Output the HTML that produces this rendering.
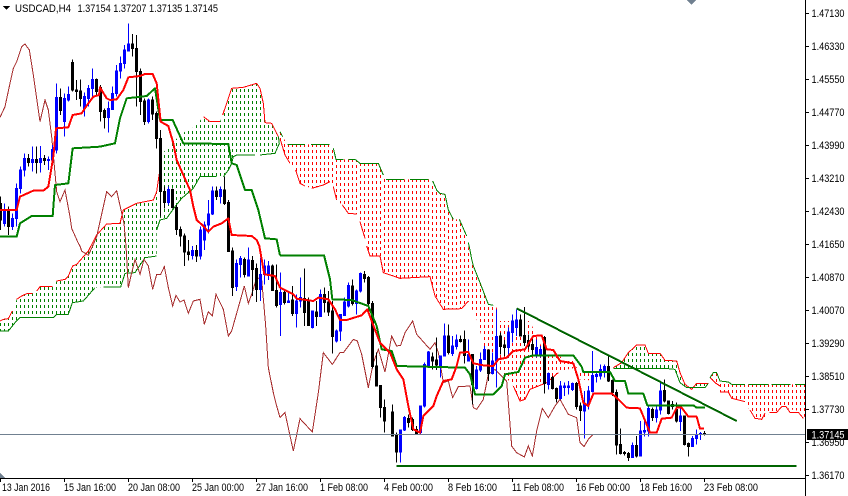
<!DOCTYPE html>
<html><head><meta charset="utf-8"><title>USDCAD,H4</title>
<style>
html,body{margin:0;padding:0;background:#fff;width:848px;height:496px;overflow:hidden}
svg{display:block}
text{font-family:"Liberation Sans",sans-serif;font-size:11px;fill:#000}
.b{stroke:#0000ff;stroke-width:3;fill:#fff}
.r{stroke:#000;stroke-width:3;fill:#f00}
.tk{fill:none;stroke:#ff0000;stroke-width:6;stroke-linejoin:round}
.kj{fill:none;stroke:#008000;stroke-width:6;stroke-linejoin:round}
.ch{fill:none;stroke:#a52a2a;stroke-width:3}
.gl{fill:none;stroke:#008000;stroke-width:3}
.rl{fill:none;stroke:#ff0000;stroke-width:3}
.tr{fill:none;stroke:#006400;stroke-width:6}
.cols{fill:none;stroke-width:3;stroke-dasharray:9 9}
</style></head><body>
<svg width="848" height="496" viewBox="0 0 848 496" xmlns="http://www.w3.org/2000/svg">
<defs>
<path id="cols" d="M1.5 0V1480M13.5 0V1480M25.5 0V1480M37.5 0V1480M49.5 0V1480M61.5 0V1480M73.5 0V1480M85.5 0V1480M97.5 0V1480M109.5 0V1480M121.5 0V1480M133.5 0V1480M145.5 0V1480M157.5 0V1480M169.5 0V1480M181.5 0V1480M193.5 0V1480M205.5 0V1480M217.5 0V1480M229.5 0V1480M241.5 0V1480M253.5 0V1480M265.5 0V1480M277.5 0V1480M289.5 0V1480M301.5 0V1480M313.5 0V1480M325.5 0V1480M337.5 0V1480M349.5 0V1480M361.5 0V1480M373.5 0V1480M385.5 0V1480M397.5 0V1480M409.5 0V1480M421.5 0V1480M433.5 0V1480M445.5 0V1480M457.5 0V1480M469.5 0V1480M481.5 0V1480M493.5 0V1480M505.5 0V1480M517.5 0V1480M529.5 0V1480M541.5 0V1480M553.5 0V1480M565.5 0V1480M577.5 0V1480M589.5 0V1480M601.5 0V1480M613.5 0V1480M625.5 0V1480M637.5 0V1480M649.5 0V1480M661.5 0V1480M673.5 0V1480M685.5 0V1480M697.5 0V1480M709.5 0V1480M721.5 0V1480M733.5 0V1480M745.5 0V1480M757.5 0V1480M769.5 0V1480M781.5 0V1480M793.5 0V1480M805.5 0V1480M817.5 0V1480M829.5 0V1480M841.5 0V1480M853.5 0V1480M865.5 0V1480M877.5 0V1480M889.5 0V1480M901.5 0V1480M913.5 0V1480M925.5 0V1480M937.5 0V1480M949.5 0V1480M961.5 0V1480M973.5 0V1480M985.5 0V1480M997.5 0V1480M1009.5 0V1480M1021.5 0V1480M1033.5 0V1480M1045.5 0V1480M1057.5 0V1480M1069.5 0V1480M1081.5 0V1480M1093.5 0V1480M1105.5 0V1480M1117.5 0V1480M1129.5 0V1480M1141.5 0V1480M1153.5 0V1480M1165.5 0V1480M1177.5 0V1480M1189.5 0V1480M1201.5 0V1480M1213.5 0V1480M1225.5 0V1480M1237.5 0V1480M1249.5 0V1480M1261.5 0V1480M1273.5 0V1480M1285.5 0V1480M1297.5 0V1480M1309.5 0V1480M1321.5 0V1480M1333.5 0V1480M1345.5 0V1480M1357.5 0V1480M1369.5 0V1480M1381.5 0V1480M1393.5 0V1480M1405.5 0V1480M1417.5 0V1480M1429.5 0V1480M1441.5 0V1480M1453.5 0V1480M1465.5 0V1480M1477.5 0V1480M1489.5 0V1480M1501.5 0V1480M1513.5 0V1480M1525.5 0V1480M1537.5 0V1480M1549.5 0V1480M1561.5 0V1480M1573.5 0V1480M1585.5 0V1480M1597.5 0V1480M1609.5 0V1480M1621.5 0V1480M1633.5 0V1480M1645.5 0V1480M1657.5 0V1480M1669.5 0V1480M1681.5 0V1480M1693.5 0V1480M1705.5 0V1480M1717.5 0V1480M1729.5 0V1480M1741.5 0V1480M1753.5 0V1480M1765.5 0V1480M1777.5 0V1480M1789.5 0V1480M1801.5 0V1480M1813.5 0V1480M1825.5 0V1480M1837.5 0V1480M1849.5 0V1480M1861.5 0V1480M1873.5 0V1480M1885.5 0V1480M1897.5 0V1480M1909.5 0V1480M1921.5 0V1480M1933.5 0V1480M1945.5 0V1480M1957.5 0V1480M1969.5 0V1480M1981.5 0V1480M1993.5 0V1480M2005.5 0V1480M2017.5 0V1480M2029.5 0V1480M2041.5 0V1480M2053.5 0V1480M2065.5 0V1480M2077.5 0V1480M2089.5 0V1480M2101.5 0V1480M2113.5 0V1480M2125.5 0V1480M2137.5 0V1480M2149.5 0V1480M2161.5 0V1480M2173.5 0V1480M2185.5 0V1480M2197.5 0V1480M2209.5 0V1480M2221.5 0V1480M2233.5 0V1480M2245.5 0V1480M2257.5 0V1480M2269.5 0V1480M2281.5 0V1480M2293.5 0V1480M2305.5 0V1480M2317.5 0V1480M2329.5 0V1480M2341.5 0V1480M2353.5 0V1480M2365.5 0V1480M2377.5 0V1480M2389.5 0V1480M2401.5 0V1480M2413.5 0V1480"/>
<clipPath id="cg">
<polygon transform="translate(0,738)" points="0,225 10,220 25,218 37,195 50,160 65,150 80,143 97,142 110,135 120,122 158,122 170,105 195,100 205,90 218,60 230,55 245,38 265,15 290,-33 320,-66 360,-68 370,-108 410,-128 460,-138 470,-163 478,-268 525,-318 555,-343 585,-358 610,-388 630,-373 660,-373 668,-393 685,-443 695,-473 730,-476 770,-488 780,-473 790,-428 795,-370 815,-368 835,-328 838,-308 825,-278 780,-273 710,-273 700,-268 695,-248 685,-228 670,-208 600,-208 580,-173 545,-143 525,-118 500,-83 480,-78 470,-48 470,30 435,35 405,80 375,82 362,123 310,123 285,125 250,165 217,170 205,205 170,205 160,215 60,215 45,230 25,255 0,255"/>
<polygon transform="translate(1680,738)" points="160,365 185,350 205,320 230,297 255,297 265,322 300,322 315,343 350,345 360,380 375,415 395,430 395,425 380,425 360,410 345,370 325,368 160,368"/>
<polygon transform="translate(1680,738)" points="395,430 410,412 445,412 445,412 435,425 405,425"/>
</clipPath>
<clipPath id="cr">
<polygon transform="translate(840,0)" points="0,395 8,410 22,433 148,433 160,445 168,478 225,478 240,490 295,490 310,525 315,538 450,538 470,570 480,580 495,583 505,630 520,658 540,658 560,708 565,738 575,778 580,798 600,848 625,913 640,916 650,923 660,963 750,963 770,1010 790,1050 840,1070 880,1083 900,1116 950,1123 950,1143 900,1138 890,1103 840,1113 835,1118 800,1148 750,1168 735,1198 720,1203 700,1158 670,1123 650,1113 620,1078 610,1028 590,958 565,903 545,926 490,928 465,888 450,830 360,835 310,818 300,768 270,768 260,738 255,715 240,665 230,642 205,640 187,615 170,600 160,560 150,545 130,555 95,565 75,558 60,550 47,510 30,490 15,465 0,415"/>
<polygon transform="translate(1680,738)" points="480,405 505,408 515,415 735,415 735,515 720,495 690,490 670,480 650,500 630,500 610,518 590,520 570,495 555,465 515,465 505,438 480,438"/>
<polygon transform="translate(1680,738)" points="450,395 460,380 470,380 480,405 480,420 465,410"/>
</clipPath>
<clipPath id="x1"><rect x="840" y="0" width="162" height="1480"/></clipPath>
<clipPath id="x2"><rect x="1002" y="0" width="72" height="1480"/></clipPath>
<clipPath id="x3"><rect x="1074" y="0" width="78" height="1480"/></clipPath>
<clipPath id="x4"><rect x="1152" y="0" width="144" height="1480"/></clipPath>
<clipPath id="x5"><rect x="1296" y="0" width="48" height="1480"/></clipPath>
<clipPath id="x6"><rect x="1344" y="0" width="36" height="1480"/></clipPath>
<clipPath id="x7"><rect x="1380" y="0" width="780" height="1480"/></clipPath>
<clipPath id="x8"><rect x="2160" y="0" width="255" height="1480"/></clipPath>
<clipPath id="cp"><rect x="0" y="0" width="805" height="478"/></clipPath>
</defs>
<rect width="848" height="496" fill="#fff"/>
<g clip-path="url(#cp)">
<g transform="scale(.33333333)" shape-rendering="crispEdges">
<!-- clouds -->
<g clip-path="url(#cg)"><use href="#cols" class="cols" stroke="#008000" style="stroke-dashoffset:-15"/></g>
<g clip-path="url(#cr)">
<g clip-path="url(#x1)"><use href="#cols" class="cols" stroke="#ff0000" style="stroke-dashoffset:0"/></g>
<g clip-path="url(#x2)"><use href="#cols" class="cols" stroke="#ff0000" style="stroke-dashoffset:-9"/></g>
<g clip-path="url(#x3)"><use href="#cols" class="cols" stroke="#ff0000" style="stroke-dashoffset:-3"/></g>
<g clip-path="url(#x4)"><use href="#cols" class="cols" stroke="#ff0000" style="stroke-dashoffset:-15"/></g>
<g clip-path="url(#x5)"><use href="#cols" class="cols" stroke="#ff0000" style="stroke-dashoffset:0"/></g>
<g clip-path="url(#x6)"><use href="#cols" class="cols" stroke="#ff0000" style="stroke-dashoffset:-6"/></g>
<g clip-path="url(#x7)"><use href="#cols" class="cols" stroke="#ff0000" style="stroke-dashoffset:-3"/></g>
<g clip-path="url(#x8)"><use href="#cols" class="cols" stroke="#ff0000" style="stroke-dashoffset:0"/></g>
</g>
<g transform="translate(0,738)">
<path class="rl" d="M0 225L10 220L25 218L37 195M50 160L65 150L80 143L97 142M110 135L120 122L158 122M170 105L195 100L205 90L218 60L230 55L245 38L265 15L290 -33L320 -66L360 -68L370 -108L410 -128L460 -138L470 -163L478 -218M610 -388L630 -373L660 -373M668 -393L685 -443L695 -473L730 -476L770 -488L780 -473L790 -428L795 -370L815 -368L835 -328"/>
<path class="gl" d="M835 -328L838 -308L825 -278L780 -273M765 -273L710 -273L700 -268L695 -248L685 -228L670 -208M650 -208L600 -208L580 -173L545 -143L525 -118L500 -83L480 -78L470 -48M470 30L435 35L405 80L375 82L362 123L310 123M285 125L250 165L217 170L205 205L170 205L160 215L60 215L45 230M45 230L25 255L0 255"/>
</g>
<g transform="translate(840,0)">
<path class="gl" d="M0 395L8 410M22 433L75 433M93 433L148 433M160 445L168 478L190 478M205 478L225 478L240 490L295 490L310 525M318 538L372 538M390 538L445 538M458 543L470 570L480 580L495 583L505 630L520 658M538 658L560 708M565 728L570 750L575 778L580 798L600 848L625 913L640 916"/>
<path class="rl" d="M0 415L15 465L30 490M47 510L60 550L75 558M95 565L130 555L150 545M160 560L170 600M187 615L205 640L230 642M240 665L255 715M260 738L270 768L300 768L310 818L360 835L450 830L465 888L490 928L545 926L565 903M700 1158L720 1203L735 1198L750 1168L800 1148L835 1118"/>
</g>
<g transform="translate(1680,738)">
<path class="rl" d="M160 365L185 350L205 320L230 297L255 297L265 322L300 322L315 343L350 345L360 380L375 415L395 430L410 412L445 412M570 492L585 517L605 520L615 502M628 499L650 499L665 482L678 482L690 499L715 499L730 517M515 457L555 467M480 438L505 438L515 457M450 395L465 410L480 420"/>
<path class="gl" d="M160 368L325 368L345 370L360 410L380 425L435 425L445 412M450 395L460 380L470 380L480 405L505 408L515 415L555 415M565 415L625 415M635 415L692 415M705 415L735 415"/>
</g>
<!-- chikou -->
<g>
<polyline class="ch" points="0,352 15,320 30,250 40,205 50,185 65,140 75,132 88,150 100,225 120,365 135,300 145,330 155,410 170,575 180,605 195,570 210,650 215,685 235,730 240,738 245,753 265,766 278,738 290,710 320,575 335,590 350,572 372,670 378,738 385,863 395,818 405,778 420,823 432,778 445,798 458,868 470,823 482,823 493,800 505,863 518,918 528,886 540,906 552,900 565,940 580,903 600,898 613,973 625,935 637,948 648,883 670,928 685,1008 695,993 733,858 745,910 755,883 770,833 785,838 797,978 805,1103 820,1178 830,1218 840,1253"/>
<polyline class="ch" transform="translate(840,738)" points="0,515 15,500 40,615 60,518 97,558 115,440 130,320 157,355 180,320 190,320 220,280 232,285 245,325 265,425 280,350 295,310 315,378 335,270 350,300 362,298 375,260 398,225 410,265 450,310 465,290 475,320 490,410 505,405 518,455 535,422 570,420 580,485 590,490 610,460 625,385 645,370 680,405 695,600 710,620 733,633 745,600 757,630 770,555 787,487 805,515 825,480 840,460 865,505 890,515 900,590 912,602 925,580 940,565 960,565"/>
</g>
<!-- candles panel A -->
<path class="r" d="M1.5 590V690M-1.5 610h6V660h-6zM25.5 620V705M22.5 635h6V680h-6zM85.5 462V500M82.5 475h6V488h-6zM109.5 440V520M106.5 478h6V488h-6zM133.5 465V495M130.5 475h6V482h-6zM181.5 265V345M178.5 292h6V332h-6zM217.5 178V275M214.5 187h6V270h-6zM229.5 240V300M226.5 270h6V275h-6zM241.5 238V320M238.5 273h6V295h-6zM289.5 235V290M286.5 238h6V275h-6zM301.5 255V365M298.5 262h6V335h-6zM313.5 325V385M310.5 332h6V353h-6zM397.5 102V170M394.5 132h6V146h-6zM409.5 105V320M406.5 145h6V215h-6zM421.5 205V345M418.5 215h6V305h-6zM433.5 295V375M430.5 303h6V365h-6zM457.5 290V360M454.5 300h6V342h-6zM469.5 335V445M466.5 340h6V415h-6zM481.5 390V650M478.5 415h6V575h-6zM493.5 560V625M490.5 575h6V607h-6zM517.5 565V625M514.5 568h6V622h-6zM529.5 615V705M526.5 622h6V688h-6zM541.5 680V740M538.5 688h6V708h-6zM553.5 700V798M550.5 708h6V756h-6zM565.5 720V782M562.5 756h6V764h-6zM589.5 735V786M586.5 752h6V768h-6zM649.5 560V600M646.5 573h6V590h-6zM673.5 530V615M670.5 570h6V610h-6zM685.5 600V756M682.5 608h6V755h-6zM697.5 743V888M694.5 753h6V863h-6zM733.5 773V833M730.5 778h6V823h-6zM757.5 768V888M754.5 781h6V808h-6zM769.5 790V906M766.5 806h6V868h-6zM817.5 793V873M814.5 798h6V871h-6zM829.5 793V923M826.5 871h6V916h-6z"/>
<path class="b" d="M13.5 610V680M10.5 630h6V670h-6zM37.5 640V690M34.5 655h6V680h-6zM49.5 550V680M46.5 565h6V655h-6zM61.5 500V580M58.5 510h6V565h-6zM73.5 460V530M70.5 475h6V510h-6zM97.5 440V515M94.5 478h6V488h-6zM121.5 438V518M118.5 475h6V488h-6zM145.5 470V510M142.5 478h6V482h-6zM157.5 435V490M154.5 448h6V480h-6zM169.5 250V460M166.5 292h6V450h-6zM193.5 280V410M190.5 295h6V365h-6zM205.5 260V305M202.5 283h6V300h-6zM253.5 278V350M250.5 290h6V325h-6zM265.5 255V320M262.5 265h6V295h-6zM277.5 205V295M274.5 238h6V265h-6zM325.5 305V398M322.5 325h6V352h-6zM337.5 260V330M334.5 280h6V328h-6zM349.5 195V290M346.5 213h6V280h-6zM361.5 170V235M358.5 190h6V213h-6zM373.5 135V205M370.5 150h6V190h-6zM385.5 70V155M382.5 132h6V153h-6zM445.5 295V370M442.5 300h6V365h-6zM505.5 560V615M502.5 568h6V607h-6zM577.5 738V778M574.5 752h6V766h-6zM601.5 680V778M598.5 690h6V768h-6zM613.5 665V750M610.5 675h6V720h-6zM625.5 600V700M622.5 642h6V675h-6zM637.5 560V645M634.5 573h6V642h-6zM661.5 560V610M658.5 568h6V590h-6zM709.5 778V873M706.5 791h6V860h-6zM721.5 768V833M718.5 776h6V793h-6zM745.5 743V830M742.5 780h6V828h-6zM781.5 773V903M778.5 823h6V868h-6zM793.5 778V853M790.5 798h6V823h-6zM805.5 783V840M802.5 798h6V826h-6z"/>
<!-- candles panel C -->
<g transform="translate(840,738)">
<path class="r" d="M13.5 130V175M10.5 140h6V170h-6zM37.5 120V210M34.5 162h6V203h-6zM73.5 68V240M70.5 158h6V200h-6zM85.5 155V240M82.5 165h6V238h-6zM109.5 165V240M106.5 198h6V212h-6zM133.5 125V200M130.5 145h6V170h-6zM145.5 135V210M142.5 168h6V198h-6zM157.5 165V323M154.5 195h6V272h-6zM217.5 100V178M214.5 120h6V172h-6zM253.5 75V110M250.5 85h6V98h-6zM265.5 90V205M262.5 95h6V172h-6zM277.5 165V368M274.5 172h6V362h-6zM289.5 320V420M286.5 360h6V420h-6zM301.5 418V515M298.5 418h6V485h-6zM313.5 460V560M310.5 485h6V525h-6zM337.5 475V570M334.5 498h6V570h-6zM349.5 560V650M346.5 565h6V618h-6zM385.5 505V545M382.5 517h6V530h-6zM397.5 515V555M394.5 520h6V550h-6zM409.5 540V562M406.5 550h6V562h-6zM457.5 320V370M454.5 333h6V345h-6zM469.5 275V372M466.5 342h6V357h-6zM505.5 235V325M502.5 270h6V320h-6zM541.5 268V290M538.5 280h6V287h-6zM553.5 253V352M550.5 280h6V328h-6zM577.5 325V475M574.5 325h6V415h-6zM625.5 310V405M622.5 312h6V382h-6zM661.5 260V325M658.5 270h6V302h-6zM673.5 282V330M670.5 297h6V305h-6zM721.5 205V272M718.5 222h6V270h-6zM733.5 183V300M730.5 268h6V290h-6zM745.5 265V310M742.5 283h6V300h-6zM757.5 270V330M754.5 296h6V310h-6zM793.5 270V443M790.5 275h6V412h-6zM817.5 390V430M814.5 395h6V428h-6zM829.5 425V470M826.5 428h6V458h-6z"/>
<path class="b" d="M1.5 80V270M-1.5 140h6V175h-6zM25.5 135V170M22.5 165h6V170h-6zM49.5 145V245M46.5 165h6V203h-6zM61.5 95V185M58.5 155h6V165h-6zM97.5 195V248M94.5 195h6V245h-6zM121.5 130V212M118.5 145h6V212h-6zM169.5 250V290M166.5 255h6V285h-6zM181.5 205V285M178.5 205h6V255h-6zM193.5 155V210M190.5 168h6V208h-6zM205.5 110V185M202.5 118h6V180h-6zM229.5 130V205M226.5 135h6V172h-6zM241.5 80V140M238.5 83h6V135h-6zM361.5 552V650M358.5 552h6V618h-6zM373.5 510V555M370.5 515h6V552h-6zM421.5 480V565M418.5 480h6V560h-6zM433.5 350V485M430.5 355h6V480h-6zM445.5 315V360M442.5 318h6V358h-6zM481.5 328V395M478.5 330h6V360h-6zM493.5 232V330M490.5 270h6V330h-6zM517.5 270V330M514.5 300h6V322h-6zM529.5 265V310M526.5 282h6V302h-6zM565.5 280V345M562.5 325h6V345h-6zM589.5 360V430M586.5 372h6V428h-6zM601.5 320V378M598.5 340h6V372h-6zM613.5 300V340M610.5 310h6V340h-6zM637.5 320V385M634.5 345h6V382h-6zM649.5 190V425M646.5 272h6V345h-6zM685.5 245V335M682.5 258h6V305h-6zM697.5 205V290M694.5 225h6V260h-6zM709.5 190V270M706.5 222h6V245h-6zM769.5 280V335M766.5 305h6V330h-6zM781.5 300V335M778.5 310h6V330h-6zM805.5 380V430M802.5 383h6V415h-6z"/>
</g>
<!-- candles panel D -->
<g transform="translate(1680,738)">
<path class="r" d="M49.5 408V490M46.5 412h6V482h-6zM61.5 470V525M58.5 480h6V493h-6zM145.5 330V408M142.5 362h6V405h-6zM157.5 400V450M154.5 403h6V440h-6zM169.5 430V625M166.5 440h6V597h-6zM181.5 547V625M178.5 595h6V622h-6zM193.5 615V628M190.5 620h6V622h-6zM205.5 618V645M202.5 622h6V635h-6zM229.5 570V635M226.5 598h6V630h-6zM277.5 485V525M274.5 490h6V515h-6zM313.5 400V470M310.5 433h6V465h-6zM325.5 465V505M322.5 465h6V503h-6zM337.5 465V490M334.5 475h6V482h-6zM349.5 470V530M346.5 490h6V525h-6zM373.5 510V598M370.5 510h6V595h-6zM385.5 590V632M382.5 592h6V602h-6zM433.5 555V568M430.5 562h6V565h-6z"/>
<path class="b" d="M1.5 405V460M-1.5 420h6V458h-6zM13.5 410V450M10.5 420h6V425h-6zM25.5 405V445M22.5 420h6V425h-6zM37.5 410V435M34.5 412h6V430h-6zM73.5 435V578M70.5 475h6V495h-6zM85.5 420V490M82.5 435h6V475h-6zM97.5 315V440M94.5 388h6V437h-6zM109.5 375V410M106.5 385h6V392h-6zM121.5 355V400M118.5 370h6V390h-6zM133.5 355V395M130.5 362h6V375h-6zM217.5 590V635M214.5 598h6V635h-6zM241.5 525V632M238.5 555h6V630h-6zM253.5 520V572M250.5 553h6V558h-6zM265.5 480V572M262.5 488h6V555h-6zM289.5 480V530M286.5 492h6V515h-6zM301.5 410V505M298.5 435h6V492h-6zM361.5 485V555M358.5 510h6V527h-6zM397.5 570V603M394.5 577h6V602h-6zM409.5 550V595M406.5 565h6V578h-6zM421.5 558V582M418.5 562h6V565h-6z"/>
</g>
<!-- kijun -->
<polyline class="kj" points="0,710 50,710 60,670 95,648 158,648 165,555 205,550 218,445 300,440 345,430 360,355 380,295 440,288 465,265 480,360 518,360 550,430 685,432 695,490 710,495 735,570 755,570 775,630 795,715 830,718 840,766"/>
<polyline class="kj" transform="translate(840,738)" points="0,28 132,28 150,100 157,160 215,162 265,180 290,240 305,310 335,315 350,360 555,365 570,385 585,445 640,445 665,420 675,385 715,378 735,335 760,328 880,328 905,362 910,378 990,378 1005,405 1035,405 1045,443 1090,443 1102,478 1240,478 1250,485 1275,485"/>
<!-- tenkan -->
<polyline class="tk" points="0,630 50,630 60,590 100,572 130,572 145,560 160,470 168,385 205,382 218,345 245,340 265,310 280,290 297,285 300,262 320,295 330,300 350,298 370,270 385,232 420,228 435,222 458,222 470,250 482,365 505,378 520,430 530,480 550,525 570,570 580,620 590,660 610,678 625,695 640,680 665,670 685,655 695,705 755,708 770,720 778,738 793,823 825,828 840,863"/>
<polyline class="tk" transform="translate(840,738)" points="0,125 40,145 50,158 100,165 115,155 145,160 165,190 180,222 200,222 245,208 262,190 275,225 300,290 330,320 350,370 370,400 385,480 400,550 420,560 430,510 460,480 470,450 490,405 515,400 530,360 540,320 565,318 580,352 610,358 640,360 655,340 680,335 700,315 735,310 760,270 785,268 800,310 820,312 840,345 880,352 895,400 910,470 925,480 940,443 995,442 1015,460 1040,485 1080,487 1110,560 1130,560 1145,518 1175,515 1190,485 1205,485 1225,512 1250,512 1260,548 1272,548"/>
<!-- price line -->
<rect x="0" y="1302" width="2415" height="3" fill="#708090"/>
<!-- trend lines -->
<path class="tr" d="M1550 925L2210 1263"/>
<path class="tr" d="M1189 1398L2390 1398"/>
</g>
</g>
<!-- axes -->
<g shape-rendering="crispEdges">
<rect x="805" y="0" width="1" height="496" fill="#000"/>
<rect x="0" y="478" width="806" height="1" fill="#000"/>
<path stroke="#000" stroke-width="1" d="M806 13.5h3M806 46.5h3M806 79.5h3M806 112.5h3M806 145.5h3M806 178.5h3M806 211.5h3M806 244.5h3M806 277.5h3M806 310.5h3M806 343.5h3M806 376.5h3M806 409.5h3M806 442.5h3M806 475.5h3M0.5 479v3M64.5 479v3M128.5 479v3M192.5 479v3M256.5 479v3M320.5 479v3M384.5 479v3M448.5 479v3M512.5 479v3M576.5 479v3M640.5 479v3M704.5 479v3"/>
<polygon points="687,0 696,0 691.5,5" fill="#708090"/>
<polygon points="0,473 5,478 0,478" fill="#708090"/>
<polygon points="3,6 10,6 6.5,10" fill="#000"/>
</g>
<!-- header -->
<text x="15" y="12" textLength="56" lengthAdjust="spacingAndGlyphs">USDCAD,H4</text>
<text x="77.5" y="12" textLength="140.5" lengthAdjust="spacingAndGlyphs">1.37154 1.37207 1.37135 1.37145</text>
<!-- price axis -->
<g>
<text x="811.5" y="17" textLength="33" lengthAdjust="spacingAndGlyphs">1.47130</text>
<text x="811.5" y="50" textLength="33" lengthAdjust="spacingAndGlyphs">1.46330</text>
<text x="811.5" y="83" textLength="33" lengthAdjust="spacingAndGlyphs">1.45550</text>
<text x="811.5" y="116" textLength="33" lengthAdjust="spacingAndGlyphs">1.44770</text>
<text x="811.5" y="149" textLength="33" lengthAdjust="spacingAndGlyphs">1.43990</text>
<text x="811.5" y="182" textLength="33" lengthAdjust="spacingAndGlyphs">1.43210</text>
<text x="811.5" y="215" textLength="33" lengthAdjust="spacingAndGlyphs">1.42430</text>
<text x="811.5" y="248" textLength="33" lengthAdjust="spacingAndGlyphs">1.41650</text>
<text x="811.5" y="281" textLength="33" lengthAdjust="spacingAndGlyphs">1.40870</text>
<text x="811.5" y="314" textLength="33" lengthAdjust="spacingAndGlyphs">1.40070</text>
<text x="811.5" y="347" textLength="33" lengthAdjust="spacingAndGlyphs">1.39290</text>
<text x="811.5" y="380" textLength="33" lengthAdjust="spacingAndGlyphs">1.38510</text>
<text x="811.5" y="413" textLength="33" lengthAdjust="spacingAndGlyphs">1.37730</text>
<text x="811.5" y="446" textLength="33" lengthAdjust="spacingAndGlyphs">1.36950</text>
<text x="811.5" y="479" textLength="33" lengthAdjust="spacingAndGlyphs">1.36170</text>
<rect x="807" y="429" width="41" height="11" fill="#000" shape-rendering="crispEdges"/>
<text x="811.5" y="438.5" textLength="33" lengthAdjust="spacingAndGlyphs" style="fill:#fff">1.37145</text>
</g>
<!-- time axis -->
<g>
<text x="2" y="491" textLength="48" lengthAdjust="spacingAndGlyphs">13 Jan 2016</text>
<text x="64" y="491" textLength="52" lengthAdjust="spacingAndGlyphs">15 Jan 16:00</text>
<text x="128" y="491" textLength="52" lengthAdjust="spacingAndGlyphs">20 Jan 08:00</text>
<text x="192" y="491" textLength="52" lengthAdjust="spacingAndGlyphs">25 Jan 00:00</text>
<text x="256" y="491" textLength="52" lengthAdjust="spacingAndGlyphs">27 Jan 16:00</text>
<text x="320" y="491" textLength="48" lengthAdjust="spacingAndGlyphs">1 Feb 08:00</text>
<text x="384" y="491" textLength="49" lengthAdjust="spacingAndGlyphs">4 Feb 00:00</text>
<text x="448" y="491" textLength="49" lengthAdjust="spacingAndGlyphs">8 Feb 16:00</text>
<text x="512" y="491" textLength="52" lengthAdjust="spacingAndGlyphs">11 Feb 08:00</text>
<text x="576" y="491" textLength="54" lengthAdjust="spacingAndGlyphs">16 Feb 00:00</text>
<text x="640" y="491" textLength="52" lengthAdjust="spacingAndGlyphs">18 Feb 16:00</text>
<text x="704" y="491" textLength="54" lengthAdjust="spacingAndGlyphs">23 Feb 08:00</text>
</g>
</svg>
</body></html>
